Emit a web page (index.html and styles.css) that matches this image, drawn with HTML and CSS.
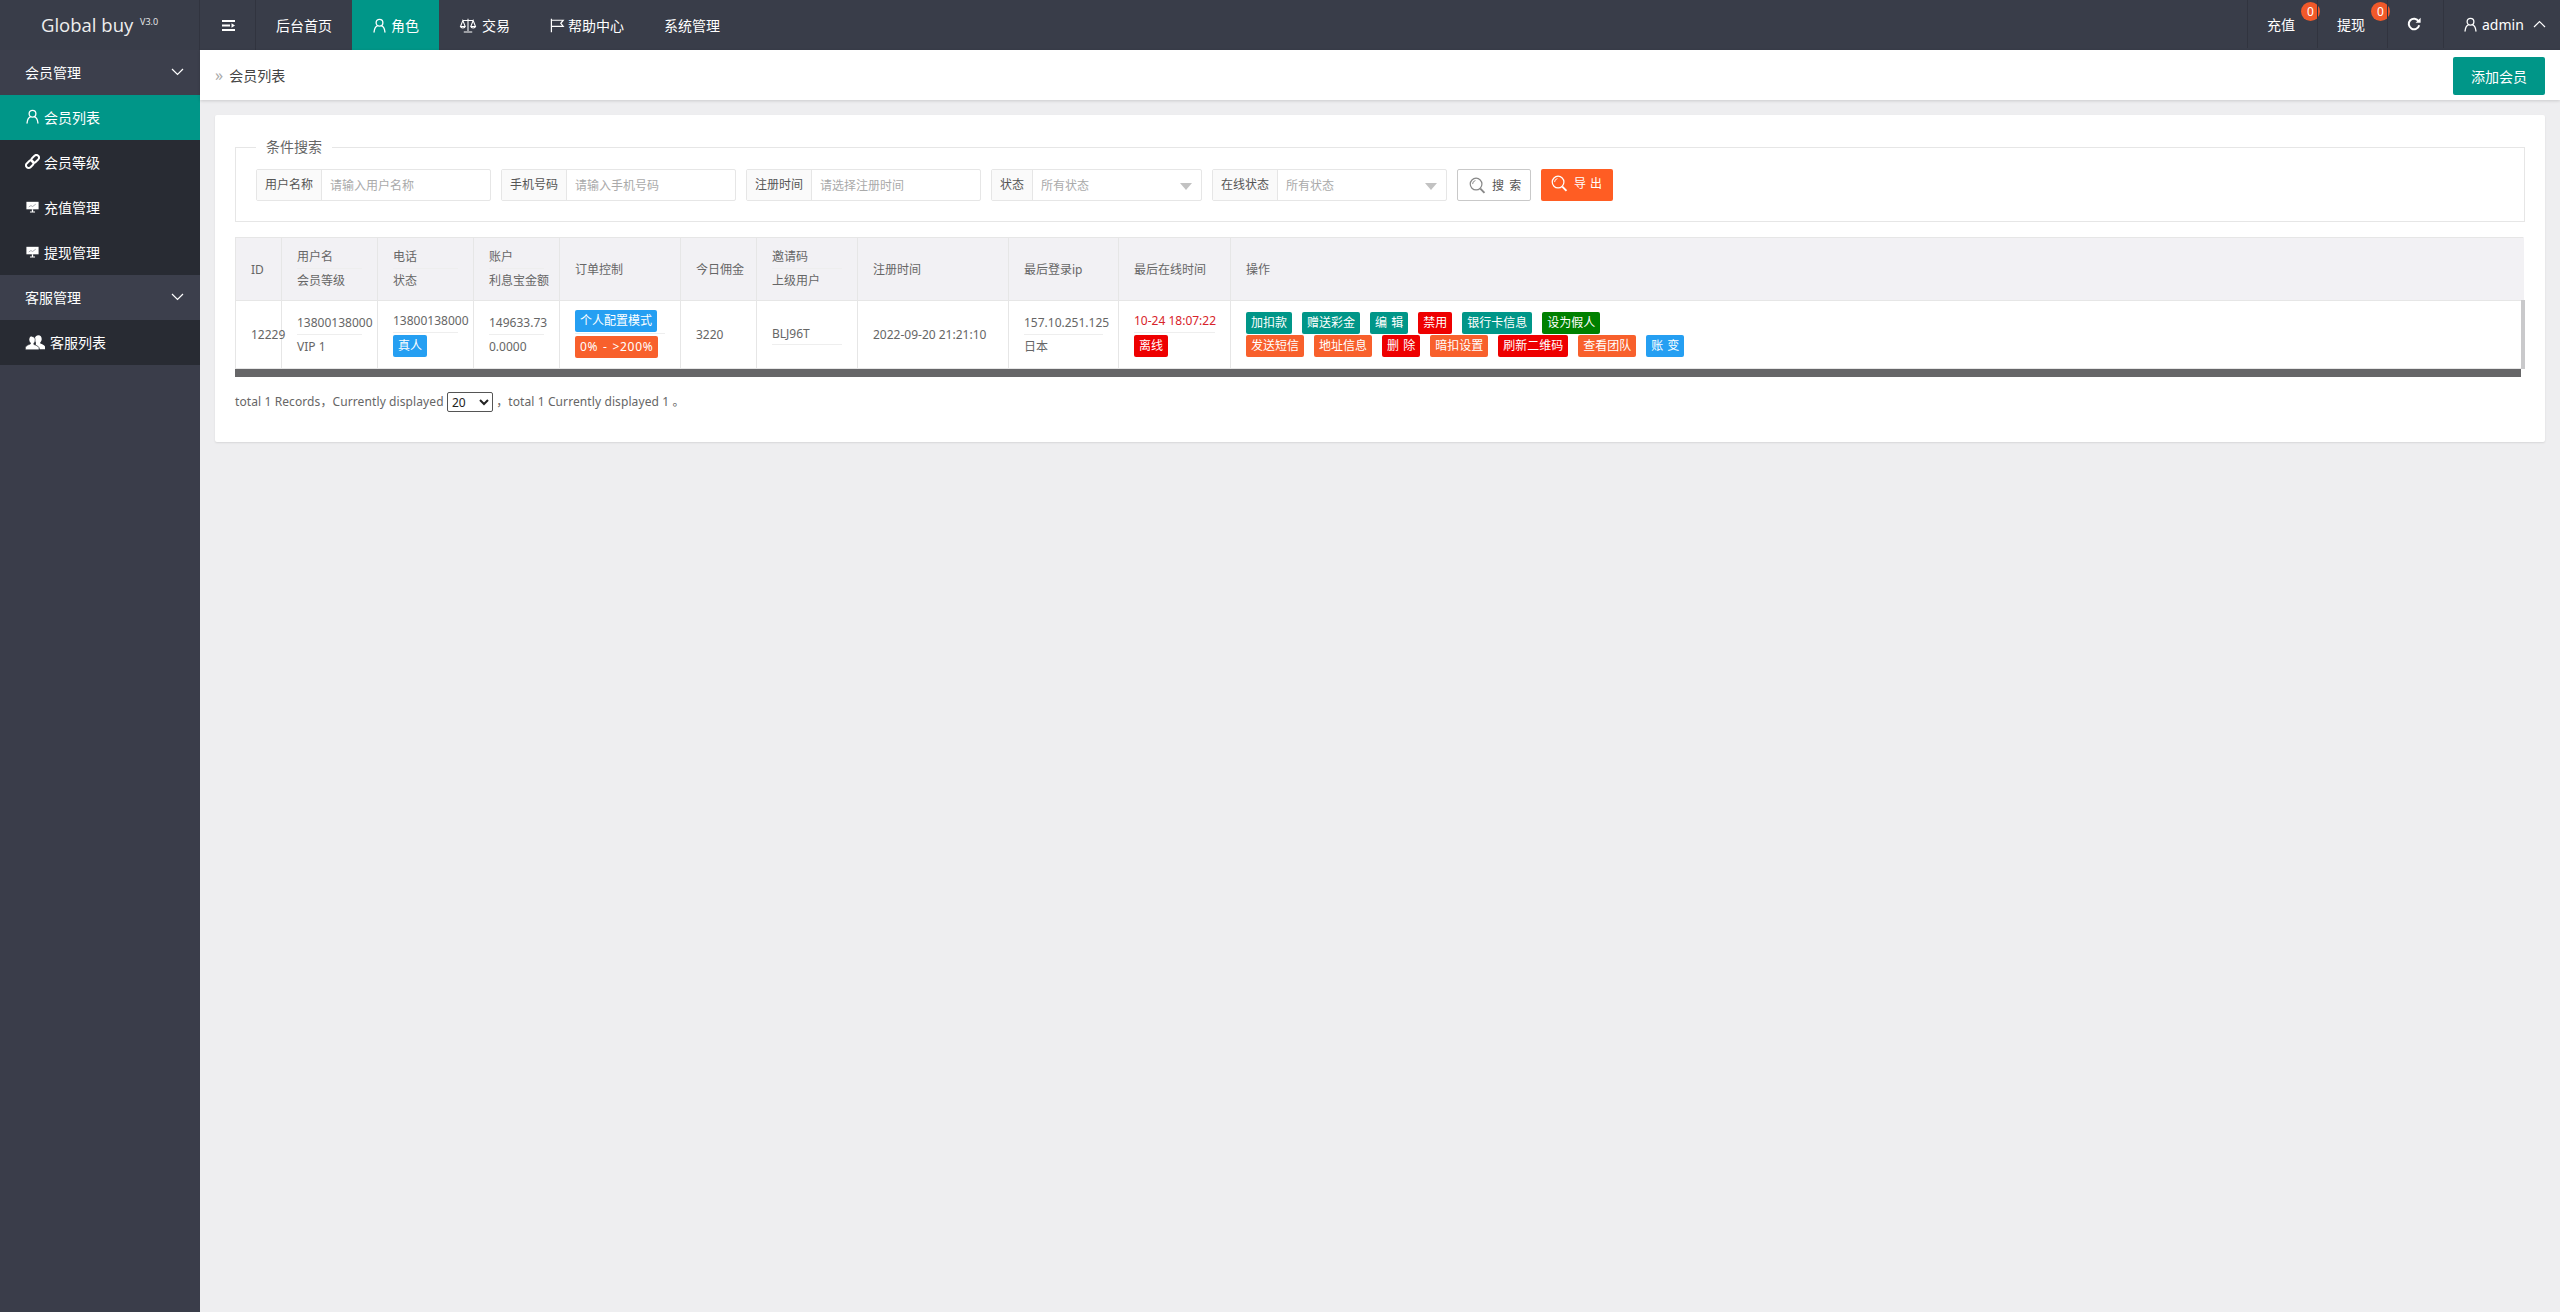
FILE: index.html
```html
<!DOCTYPE html>
<html lang="zh-CN">
<head>
<meta charset="UTF-8">
<meta name="viewport" content="width=device-width, initial-scale=1.0">
<title>Global buy</title>
<link rel="stylesheet" href="styles.css">
</head>
<body>

<svg class="sprite" xmlns="http://www.w3.org/2000/svg">
    <symbol id="i-user" viewBox="0 0 16 16"><circle cx="8" cy="5" r="3.6" fill="none" stroke="currentColor" stroke-width="1.4"/><path d="M2.2 15c.3-4 2.4-6.4 3.8-6.9M13.8 15c-.3-4-2.4-6.4-3.8-6.9" fill="none" stroke="currentColor" stroke-width="1.4" stroke-linecap="round"/></symbol>
    <symbol id="i-scale" viewBox="0 0 18 16"><path d="M9 .8v13M4.5 15h9M3.5 2.6h11M3.5 2.6 1 9h5zM14.5 2.6 12 9h5zM1 9c.4 2.2 4.6 2.2 5 0M12 9c.4 2.2 4.6 2.2 5 0" fill="none" stroke="currentColor" stroke-width="1.1"/></symbol>
    <symbol id="i-flag" viewBox="0 0 16 16"><path d="M1.5.8v14.4M1.5 2.4h12.6l-2.6 3.3 2.6 3.3H1.5" fill="none" stroke="currentColor" stroke-width="1.3"/></symbol>
    <symbol id="i-link" viewBox="0 0 16 16"><g fill="none" stroke="currentColor" stroke-width="2.1" transform="rotate(-45 8 8)"><rect x="-.6" y="5.2" width="9" height="5.6" rx="2.8"/><rect x="7.6" y="5.2" width="9" height="5.6" rx="2.8"/></g></symbol>
    <symbol id="i-board" viewBox="0 0 16 16"><path d="M1.5 3h13v8h-13z" fill="currentColor"/><path d="M4 8.500 6.300 7l1.800 1 3.400-2.500" fill="none" stroke="#8d9098" stroke-width=".8"/><path d="M7.300 11h1.400v2.200h2V14.500H5.300v-1.300h2z" fill="currentColor"/></symbol>
    <symbol id="i-users" viewBox="0 0 20 16"><path d="M13.5 1.2c2 0 3.2 1.6 3.2 3.7 0 1.500-.6 2.800-1.500 3.500l.1 1c1.800.6 4.100 1.700 4.700 3v2.800h-5.300c-.3-1.900-2-3.200-3.900-4l.1-2.700c-.7-.8-1.100-2-1.100-3.500 0-2.100 1.700-3.800 3.700-3.800z" fill="currentColor"/><path d="M6.800 2.400c2 0 3.400 1.500 3.400 3.500 0 1.500-.6 2.800-1.400 3.500l.1 1.100c1.900.6 4.600 1.800 5.100 3.100V15.800H.4v-2.700c.6-1.300 3.200-2.500 5-3.100l.1-1.100c-.9-.7-1.500-2-1.500-3.500 0-2 1.300-3.500 2.800-3.500z" fill="currentColor" stroke="#282b33" stroke-width=".6"/></symbol>
    <symbol id="i-search" viewBox="0 0 18 18"><circle cx="7.500" cy="7.500" r="6.200" fill="none" stroke="currentColor" stroke-width="1.300"/><path d="M3.800 7.500a3.800 3.800 0 0 1 3-3.700" fill="none" stroke="currentColor"/><path d="m12 12.300 4.400 4.600" fill="none" stroke="currentColor" stroke-width="2"/></symbol>
</svg>

<header class="topbar">
    <div class="logo">Global buy <sup>V3.0</sup></div>
    <div class="nav-toggle">
        <svg width="13" height="11" viewBox="0 0 13 11"><path d="M0 0h13v2H0zM0 9h13v2H0zM0 4.500h8v2H0zM13 5.500 9.500 3.300v4.400z" fill="#fff"/></svg>
    </div>
    <nav class="nav">
        <a class="nav-item">后台首页</a>
        <a class="nav-item active"><svg class="ic"><use href="#i-user"/></svg>角色</a>
        <a class="nav-item"><svg class="ic ic-scale"><use href="#i-scale"/></svg>交易</a>
        <a class="nav-item"><svg class="ic ic-flag"><use href="#i-flag"/></svg>帮助中心</a>
        <a class="nav-item">系统管理</a>
    </nav>
    <div class="nav-right">
        <a class="nr-item nr-money">充值<span class="dot">0</span></a>
        <a class="nr-item nr-money">提现<span class="dot">0</span></a>
        <a class="nr-item nr-refresh">
            <svg width="14" height="14" viewBox="0 0 14 14"><path d="M11.600 4.200A5.300 5.300 0 1 0 12.200 8.300" fill="none" stroke="#fff" stroke-width="2"/><path d="M13.600 0.800v5h-5z" fill="#fff"/></svg>
        </a>
        <a class="nr-item nr-user">
            <svg class="ic"><use href="#i-user"/></svg>admin
            <svg class="chev-up" width="13" height="8" viewBox="0 0 13 8"><path d="m1 7 5.500-5.500L12 7" fill="none" stroke="#fff" stroke-width="1.200"/></svg>
        </a>
    </div>
</header>

<div class="layout">
    <aside class="sidebar">
        <div class="side-group">会员管理<svg class="chev" width="13" height="8" viewBox="0 0 13 8"><path d="m1 1 5.500 5.500L12 1" fill="none" stroke="#fff" stroke-width="1.200"/></svg></div>
        <a class="side-item active"><svg class="side-ic"><use href="#i-user"/></svg>会员列表</a>
        <a class="side-item"><svg class="side-ic"><use href="#i-link"/></svg>会员等级</a>
        <a class="side-item"><svg class="side-ic"><use href="#i-board"/></svg>充值管理</a>
        <a class="side-item"><svg class="side-ic"><use href="#i-board"/></svg>提现管理</a>
        <div class="side-group">客服管理<svg class="chev" width="13" height="8" viewBox="0 0 13 8"><path d="m1 1 5.500 5.500L12 1" fill="none" stroke="#fff" stroke-width="1.200"/></svg></div>
        <a class="side-item"><svg class="side-ic wide"><use href="#i-users"/></svg>客服列表</a>
    </aside>

    <main class="main">
        <div class="crumbbar">
            <div class="crumb"><span class="crumb-sep">»</span>会员列表</div>
            <button class="btn-add" type="button">添加会员</button>
        </div>

        <div class="content">
            <div class="card">
                <fieldset class="search">
                    <legend>条件搜索</legend>
                    <form class="search-row">
                        <div class="field"><label>用户名称</label><input type="text" placeholder="请输入用户名称"></div>
                        <div class="field"><label>手机号码</label><input type="text" placeholder="请输入手机号码"></div>
                        <div class="field"><label>注册时间</label><input type="text" placeholder="请选择注册时间"></div>
                        <div class="field field-select"><label>状态</label><input type="text" placeholder="所有状态" readonly></div>
                        <div class="field field-select"><label>在线状态</label><input type="text" placeholder="所有状态" readonly></div>
                        <button class="btn-search" type="button"><svg class="btn-ic"><use href="#i-search"/></svg>搜 索</button>
                        <button class="btn-export" type="button"><svg class="btn-ic"><use href="#i-search"/></svg>导出</button>
                    </form>
                </fieldset>

                <table class="list">
                    <thead>
                        <tr>
                            <th class="c-id">ID</th>
                            <th class="c-user"><div class="line">用户名</div><div class="line-end">会员等级</div></th>
                            <th class="c-tel"><div class="line">电话</div><div class="line-end">状态</div></th>
                            <th class="c-acc"><div class="line">账户</div><div class="line-end">利息宝金额</div></th>
                            <th class="c-order">订单控制</th>
                            <th class="c-today">今日佣金</th>
                            <th class="c-code"><div class="line">邀请码</div><div class="line-end">上级用户</div></th>
                            <th class="c-reg">注册时间</th>
                            <th class="c-ip">最后登录ip</th>
                            <th class="c-online">最后在线时间</th>
                            <th>操作</th>
                        </tr>
                    </thead>
                    <tbody>
                        <tr>
                            <td>12229</td>
                            <td><div class="line">13800138000</div><div class="line-end">VIP 1</div></td>
                            <td><div class="line line-top">13800138000</div><div class="line-tag"><span class="tag blue">真人</span></div></td>
                            <td><div class="line">149633.73</div><div class="line-end">0.0000</div></td>
                            <td><div class="line line-order"><span class="tag blue">个人配置模式</span></div><div class="line-tag"><span class="tag orange tag-rate">0% - &gt;200%</span></div></td>
                            <td>3220</td>
                            <td><div class="line line-single">BLJ96T</div></td>
                            <td>2022-09-20 21:21:10</td>
                            <td><div class="line">157.10.251.125</div><div class="line-end">日本</div></td>
                            <td><div class="line line-top text-red">10-24 18:07:22</div><div class="line-tag"><span class="tag red">离线</span></div></td>
                            <td class="c-ops">
                                <div class="ops">
                                    <span class="tag teal">加扣款</span>
                                    <span class="tag teal">赠送彩金</span>
                                    <span class="tag teal">编 辑</span>
                                    <span class="tag red">禁用</span>
                                    <span class="tag teal">银行卡信息</span>
                                    <span class="tag green">设为假人</span>
                                </div>
                                <div class="ops">
                                    <span class="tag orange">发送短信</span>
                                    <span class="tag orange">地址信息</span>
                                    <span class="tag red">删 除</span>
                                    <span class="tag orange">暗扣设置</span>
                                    <span class="tag red">刷新二维码</span>
                                    <span class="tag orange">查看团队</span>
                                    <span class="tag blue">账 变</span>
                                </div>
                            </td>
                        </tr>
                    </tbody>
                </table>
                <div class="scroll-thumb"></div>

                <div class="pager">total 1 Records，Currently displayed <select><option>20</option><option>50</option></select> ，total 1 Currently displayed 1 。</div>
            </div>
        </div>
    </main>
</div>

</body>
</html>
```

FILE: styles.css
```css
* {
    box-sizing: border-box;
}

body {
    margin: 0;
    height: 100vh;
    overflow: hidden;
    display: flex;
    flex-direction: column;
    background-color: #eeeef0;
    color: #666;
    font-family: "Noto Sans", "Noto Sans CJK SC", sans-serif;
    font-size: 12px;
}

.sprite {
    display: none;
}

a {
    color: inherit;
    text-decoration: none;
}

/* top bar */
.topbar {
    display: flex;
    flex: none;
    height: 50px;
    background-color: #393d49;
    color: #fff;
    font-size: 14px;
}

.logo {
    width: 200px;
    padding-left: 41px;
    border-right: 1px solid #31343f;
    font-family: "Open Sans", sans-serif;
    font-size: 18.5px;
    line-height: 50px;
    color: #eee;
}

.logo sup {
    font-size: 9px;
    line-height: 0;
    margin-left: 2px;
}

.nav-toggle {
    display: flex;
    align-items: center;
    justify-content: center;
    width: 56px;
    padding-left: 2px;
    border-right: 1px solid #31343f;
}

.nav {
    display: flex;
    flex: 1;
}

.nav-item {
    display: flex;
    align-items: center;
    padding: 0 20px;
}

.nav-item.active {
    background-color: #009688;
}

.ic {
    width: 15px;
    height: 15px;
    margin-right: 4px;
}

.ic-scale {
    width: 18px;
    margin-right: 5px;
}

.ic-flag {
    width: 15px;
    margin-right: 3px;
}

.nav-right {
    display: flex;
}

.nr-item {
    display: flex;
    align-items: center;
    position: relative;
    border-left: 1px solid #31343f;
    margin: 0 0 2px;
}

.nr-money {
    width: 70px;
    padding-left: 19px;
}

.nr-refresh {
    width: 56px;
    padding-left: 19px;
}

.nr-user {
    width: 117px;
    padding-left: 19px;
    font-size: 14px;
}

.chev-up {
    margin-left: 9px;
}

.dot {
    position: absolute;
    left: 53px;
    top: 2px;
    width: 19px;
    height: 19px;
    border-radius: 50%;
    background-color: #f1592a;
    font-size: 12px;
    line-height: 19px;
    text-align: center;
}

/* page body */
.layout {
    display: flex;
    flex: 1;
    min-height: 0;
}

.sidebar {
    flex: none;
    width: 200px;
    background-color: #3a3d4a;
    color: #fff;
    font-size: 14px;
}

.side-group {
    display: flex;
    align-items: center;
    justify-content: space-between;
    height: 45px;
    padding: 0 16px 2px 25px;
    background-color: #3c3f4c;
}

.side-item {
    display: flex;
    align-items: center;
    height: 45px;
    padding: 0 0 2px 25px;
    background-color: #282b33;
}

.side-item.active {
    background-color: #009688;
}

.side-ic {
    width: 15px;
    height: 15px;
    margin-right: 4px;
}

.side-ic.wide {
    width: 20px;
    height: 16px;
    margin-right: 5px;
}

.main {
    flex: 1;
    min-width: 0;
}

.crumbbar {
    display: flex;
    align-items: center;
    justify-content: space-between;
    height: 50px;
    padding: 0 15px;
    background-color: #fff;
    box-shadow: 0 1px 3px rgba(0, 0, 0, 0.15);
}

.crumb {
    color: #444;
    font-size: 14px;
}

.crumb-sep {
    margin-right: 6px;
    color: #aaa;
    font-size: 16px;
}

.btn-add {
    width: 92px;
    height: 38px;
    margin-top: 2px;
    border: none;
    border-radius: 2px;
    background-color: #009688;
    color: #fff;
    font: inherit;
    font-size: 14px;
}

.content {
    padding: 15px;
}

.card {
    height: 327px;
    padding: 20px;
    background-color: #fff;
    border-radius: 2px;
    box-shadow: 0 1px 2px rgba(0, 0, 0, 0.1);
}

/* search form */
.search {
    margin: 0;
    padding: 10px 20px 20px;
    border: 1px solid #e6e6e6;
}

.search legend {
    padding: 0 10px;
    font-size: 14px;
    line-height: 24px;
    color: #666;
}

.search-row {
    display: flex;
    gap: 10px;
}

.field {
    display: flex;
    height: 32px;
    border: 1px solid #e6e6e6;
    border-radius: 2px;
}

.field label {
    flex: none;
    padding: 0 8px;
    border-right: 1px solid #e6e6e6;
    background-color: #fafafa;
    line-height: 30px;
    color: #555;
}

.field input {
    width: 168px;
    border: none;
    padding: 0 8px;
    outline: none;
    font: inherit;
    background: transparent;
}

.field input::placeholder {
    color: #aaa;
}

.field-select {
    position: relative;
}

.field-select::after {
    content: "";
    position: absolute;
    right: 9px;
    top: 13px;
    border: 6px solid transparent;
    border-top: 7px solid #c2c2c2;
    border-bottom: none;
}

.btn-search,
.btn-export {
    display: flex;
    align-items: center;
    height: 32px;
    border-radius: 2px;
    font: inherit;
    letter-spacing: 1px;
    white-space: nowrap;
}

.btn-search {
    width: 74px;
    padding: 0 0 0 11px;
    border: 1px solid #c9c9c9;
    background-color: #fff;
    color: #555;
}

.btn-search .btn-ic {
    color: #888;
}

.btn-export {
    width: 72px;
    padding: 0 0 4px 10px;
    border: none;
    background-color: #ff5d23;
    color: #fff;
    letter-spacing: 4px;
}

.btn-ic {
    flex: none;
    width: 17px;
    height: 17px;
    margin-right: 6px;
}

/* table */
.list {
    width: 2290px;
    margin-top: 15px;
    border-collapse: collapse;
    table-layout: fixed;
}

.list th,
.list td {
    padding: 0 15px;
    border: 1px solid #e6e6e6;
    font-weight: normal;
    text-align: left;
    white-space: nowrap;
}

.list th {
    height: 63px;
    background-color: #f2f1f4;
}

.list td {
    height: 68px;
}

.list th:last-child {
    border-right-color: #f2f1f4;
}

.list td:last-child {
    border-right: 4px solid #c9c9cb;
}

.c-id { width: 46px; }
.c-user { width: 96px; }
.c-tel { width: 96px; }
.c-acc { width: 86px; }
.c-order { width: 121px; }
.c-today { width: 76px; }
.c-code { width: 101px; }
.c-reg { width: 151px; }
.c-ip { width: 110px; }
.c-online { width: 112px; }

.line {
    height: 23px;
    border-bottom: 1px solid #eee;
    line-height: 22px;
}

.line-end {
    height: 23px;
    line-height: 24px;
}

.line-top {
    height: 22px;
    line-height: 20px;
}

.line-tag {
    height: 26px;
    padding-top: 2px;
}

.line-order {
    height: 24px;
}

.line-single {
    height: 21px;
    line-height: 20px;
}

.text-red {
    color: #d8232a;
}

.tag {
    display: inline-block;
    height: 22px;
    padding: 0 5px;
    border-radius: 2px;
    color: #fff;
    line-height: 22px;
    word-spacing: 1px;
    vertical-align: top;
}

.tag-rate {
    letter-spacing: 0.7px;
}

.teal { background-color: #009688; }
.red { background-color: #ee0000; }
.orange { background-color: #f8602c; }
.green { background-color: #008000; }
.blue { background-color: #259ff2; }

.ops {
    display: flex;
    gap: 10px;
}

.ops + .ops {
    margin-top: 1px;
}

.scroll-thumb {
    width: 2286px;
    height: 8px;
    background-color: #666668;
}

.pager {
    margin-top: 15px;
    letter-spacing: 0.1px;
    line-height: 20px;
}

.pager select {
    width: 46px;
    height: 20px;
    padding: 0;
    border: 1px solid #555;
    border-radius: 2px;
    background-color: #fff;
    color: #222;
    font: inherit;
    vertical-align: top;
}
```
